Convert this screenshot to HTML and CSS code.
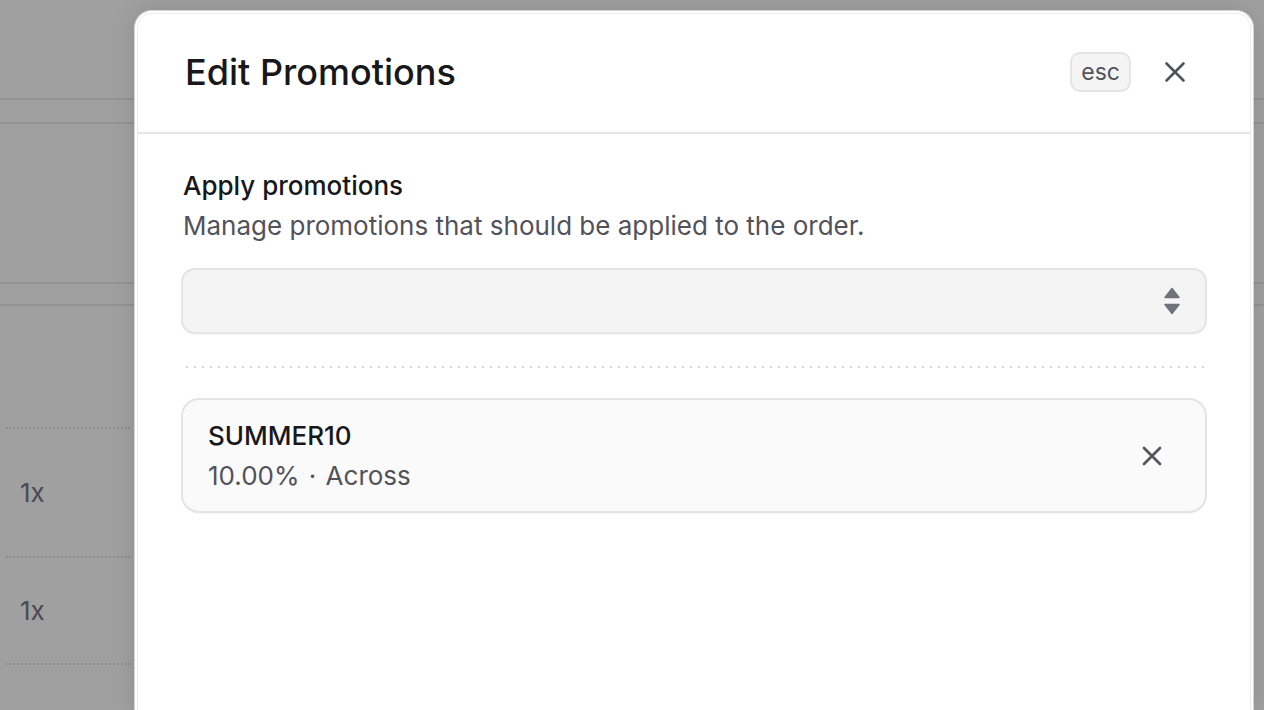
FILE: index.html
```html
<!DOCTYPE html>
<html>
<head>
<meta charset="utf-8">
<link rel="stylesheet" href="styles.css">
</head>
<body>
<div class="page">
  <div class="bg-top"></div>
  <div class="bg-row bg-row-a"></div>
  <div class="bg-section"></div>
  <div class="bg-row bg-row-b"></div>
  <div class="bg-items">
    <div class="bg-item"><span class="qty">1x</span></div>
    <div class="bg-item bg-item-2"><span class="qty">1x</span></div>
  </div>
</div>

<div class="modal">
  <div class="modal-inner">
    <div class="modal-header">
      <h1 class="title">Edit Promotions</h1>
      <div class="header-actions">
        <kbd class="esc">esc</kbd>
        <button class="close-btn" aria-label="Close">
          <svg width="24" height="24" viewBox="0 0 24 24" fill="none"><path d="M3.5 3.5 20.5 20.5M20.5 3.5 3.5 20.5" stroke="#52525b" stroke-width="2.6" stroke-linecap="round"/></svg>
        </button>
      </div>
    </div>
    <div class="modal-body">
      <div class="field-label">Apply promotions</div>
      <div class="field-hint">Manage promotions that should be applied to the order.</div>
      <div class="select">
        <svg class="chev" width="16" height="28" viewBox="0 0 16 28"><path d="M8 1.5 15 10.5H1Z" fill="#71717a" stroke="#71717a" stroke-width="1.5" stroke-linejoin="round"/><path d="M8 26.5 15 17.5H1Z" fill="#71717a" stroke="#71717a" stroke-width="1.5" stroke-linejoin="round"/></svg>
      </div>
      <div class="dots"></div>
      <div class="promo">
        <div class="promo-text">
          <div class="promo-code">SUMMER10</div>
          <div class="promo-meta">10.00% <span class="sep">·</span> Across</div>
        </div>
        <button class="remove-btn" aria-label="Remove">
          <svg width="22" height="22" viewBox="0 0 22 22" fill="none"><path d="M3 3 19 19M19 3 3 19" stroke="#52525b" stroke-width="2.6" stroke-linecap="round"/></svg>
        </button>
      </div>
    </div>
  </div>
</div>
</body>
</html>
```
FILE: styles.css
```css
* { box-sizing: border-box; }
html, body { margin: 0; padding: 0; }
body {
  width: 1264px;
  height: 710px;
  overflow: hidden;
  background: #a0a0a0;
  font-family: Inter, "Noto Sans", sans-serif;
  position: relative;
}
.page {
  width: 1264px;
  height: 710px;
}
.bg-top { height: 98px; }
.bg-row { border-top: 2px solid #939393; border-bottom: 2px solid #939393; }
.bg-row-a { height: 26px; }
.bg-section { height: 158px; }
.bg-row-b { height: 24px; }
.bg-items { padding: 121px 0 0 6px; width: 130px; }
.bg-item {
  border-top: 2px dotted #8e8e8e;
  height: 129px;
  display: flex;
  align-items: center;
  padding-left: 14px;
}
.bg-item-2 { height: 109px; border-bottom: 2px dotted #8e8e8e; }
.qty { font-size: 26px; color: #4a4a4f; }

.modal {
  position: absolute;
  left: 134px;
  top: 10px;
  width: 1120px;
  height: 700px;
  background: #fff;
  border-radius: 18px 18px 0 0;
  border: 1px solid #d6d6d6;
  border-bottom: 0;
  padding: 2px 2px 0 2px;
  box-shadow: 0 0 24px rgba(0,0,0,0.12);
  overflow: hidden;
}
.modal-inner {
  height: 100%;
  border: 1px solid #ececee;
  border-bottom: 0;
  border-radius: 15px 15px 0 0;
}
.modal-header {
  height: 120px;
  border-bottom: 2px solid #e6e6e8;
  display: flex;
  align-items: center;
  justify-content: space-between;
  padding: 0 63px 2px 47px;
}
.title {
  margin: 0;
  font-size: 36px;
  font-weight: 500;
  color: #18181b;
}
.header-actions { display: flex; align-items: center; gap: 32px; }
.esc {
  font-family: Inter, "Noto Sans", sans-serif;
  font-size: 23px;
  color: #52525b;
  background: #f4f4f5;
  border: 2px solid #e4e4e7;
  border-radius: 10px;
  height: 40px;
  padding: 0 9px;
  display: flex;
  align-items: center;
}
.close-btn, .remove-btn {
  border: 0;
  background: none;
  padding: 0;
  display: flex;
  align-items: center;
  justify-content: center;
}
.modal-body { padding: 34px 45px 0 45px; }
.field-label {
  font-size: 26px;
  font-weight: 500;
  color: #18181b;
  line-height: 36px;
}
.field-hint {
  font-size: 26px;
  color: #52525b;
  line-height: 36px;
  margin-top: 4px;
}
.select {
  margin-top: 26px;
  height: 62px;
  background: #f4f4f5;
  border-radius: 12px;
  box-shadow: 0 0 0 2px #e4e4e7, 0 2px 3px rgba(0,0,0,0.08);
  display: flex;
  align-items: center;
  justify-content: flex-end;
  padding-right: 25px;
}
.dots {
  margin-top: 34px;
  height: 2px;
  background-image: radial-gradient(circle, #d4d4d8 1px, transparent 1.2px);
  background-size: 8px 2px;
  background-position: 0 0;
}
.promo {
  margin-top: 32px;
  height: 111px;
  background: #fafafa;
  border-radius: 16px;
  box-shadow: 0 0 0 2px #e4e4e7, 0 2px 3px rgba(0,0,0,0.08);
  display: flex;
  align-items: center;
  justify-content: space-between;
  padding: 0 42px 0 25px;
}
.promo-code { font-size: 26px; font-weight: 500; color: #18181b; line-height: 36px; }
.promo-meta { font-size: 26px; color: #52525b; line-height: 36px; margin-top: 4px; }
.sep { margin: 0 2px; }
```
